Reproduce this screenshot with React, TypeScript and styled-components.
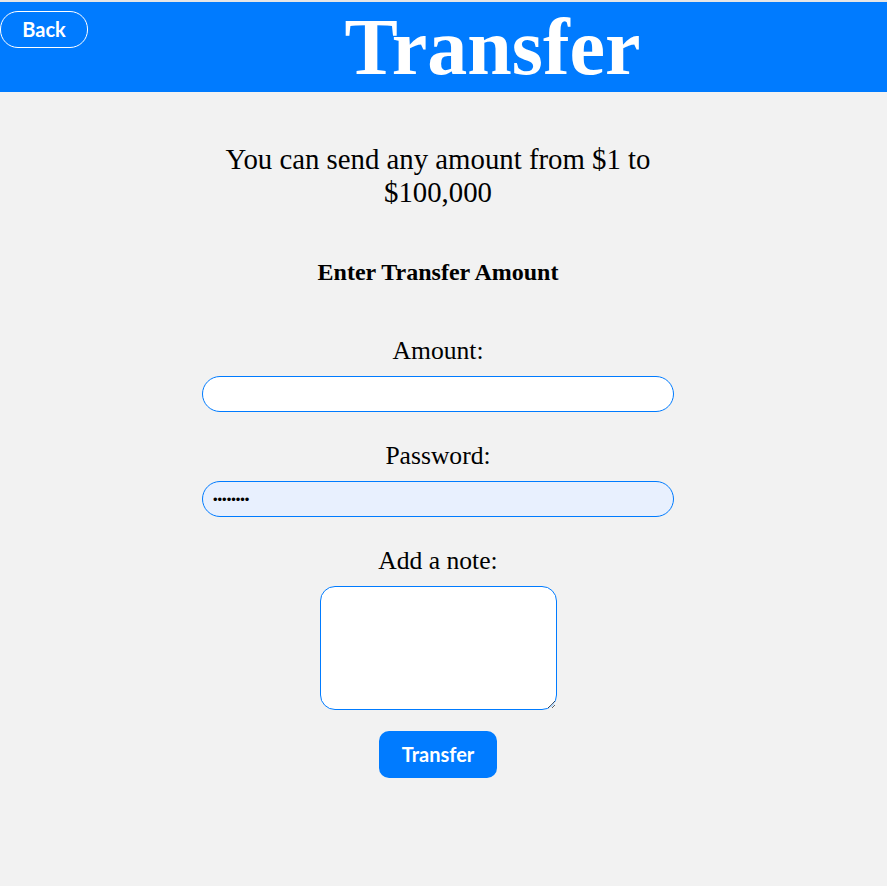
import { useState } from "react";
import styled, { createGlobalStyle } from "styled-components";

const GlobalStyle = createGlobalStyle`
  html, body {
    margin: 0;
    padding: 0;
    background-color: #f2f2f2;
  }
  body {
    font-family: "Liberation Serif", "Times New Roman", serif;
    border-top: 2px solid #e6e6e6;
  }
`;

const Page = styled.div`
  min-height: 884px;
  background-color: #f2f2f2;
`;

const Header = styled.header`
  display: flex;
  align-items: flex-start;
  height: 90px;
  background-color: #007bff;
`;

const BackButton = styled.button`
  margin-top: 9px;
  width: 88px;
  height: 37px;
  padding: 0 0 2px;
  background: transparent;
  color: #ffffff;
  border: 1px solid #ffffff;
  border-radius: 18px;
  font-family: Lato, "Open Sans", sans-serif;
  font-weight: 700;
  font-size: 20px;
  cursor: pointer;
`;

const Title = styled.h1`
  flex: 1;
  margin: 0;
  padding-left: 10px;
  color: #ffffff;
  font-size: 80px;
  font-weight: 700;
  line-height: 90px;
  text-align: center;
`;

const Main = styled.main`
  display: flex;
  flex-direction: column;
  align-items: center;
  padding-right: 11px;
  text-align: center;
`;

const Intro = styled.p`
  max-width: 460px;
  margin: 51px 0 0;
  font-size: 28.8px;
  line-height: 33px;
`;

const Heading = styled.h2`
  margin: 49px 0 0;
  font-size: 24px;
  line-height: 28px;
  font-weight: 700;
`;

const Form = styled.form`
  display: flex;
  flex-direction: column;
  align-items: center;
  margin-top: 50px;
`;

const Label = styled.label<{ $first?: boolean }>`
  margin-top: ${(p) => (p.$first ? "0" : "29px")};
  margin-bottom: 11px;
  font-size: 25.6px;
  line-height: 29px;
`;

const Input = styled.input<{ $filled?: boolean }>`
  box-sizing: border-box;
  width: 472px;
  height: 36px;
  padding: 0 10px;
  border: 1px solid #007bff;
  border-radius: 18px;
  background-color: ${(p) => (p.$filled ? "#e8f0fe" : "#ffffff")};
  font-size: 13px;
  outline: none;
`;

const Note = styled.textarea`
  box-sizing: border-box;
  width: 237px;
  height: 124px;
  padding: 8px;
  border: 1px solid #007bff;
  border-radius: 15px;
  background-color: #ffffff;
  outline: none;
`;

const SubmitButton = styled.button`
  margin-top: 21px;
  width: 118px;
  height: 47px;
  padding: 0 0 1px;
  border: none;
  border-radius: 10px;
  background-color: #007bff;
  color: #ffffff;
  font-family: Lato, "Open Sans", sans-serif;
  font-weight: 700;
  font-size: 20px;
  cursor: pointer;
`;

const App: React.FC = () => {
  const [amount, setAmount] = useState("");
  const [password, setPassword] = useState("password");
  const [note, setNote] = useState("");

  return (
    <Page>
      <GlobalStyle />
      <Header>
        <BackButton type="button">Back</BackButton>
        <Title>Transfer</Title>
      </Header>
      <Main>
        <Intro>You can send any amount from $1 to $100,000</Intro>
        <Heading>Enter Transfer Amount</Heading>
        <Form onSubmit={(e) => e.preventDefault()}>
          <Label $first htmlFor="amount">
            Amount:
          </Label>
          <Input
            id="amount"
            type="text"
            value={amount}
            onChange={(e) => setAmount(e.target.value)}
          />
          <Label htmlFor="password">Password:</Label>
          <Input
            id="password"
            type="password"
            $filled
            value={password}
            onChange={(e) => setPassword(e.target.value)}
          />
          <Label htmlFor="note">Add a note:</Label>
          <Note id="note" value={note} onChange={(e) => setNote(e.target.value)} />
          <SubmitButton type="submit">Transfer</SubmitButton>
        </Form>
      </Main>
    </Page>
  );
};

export default App;
